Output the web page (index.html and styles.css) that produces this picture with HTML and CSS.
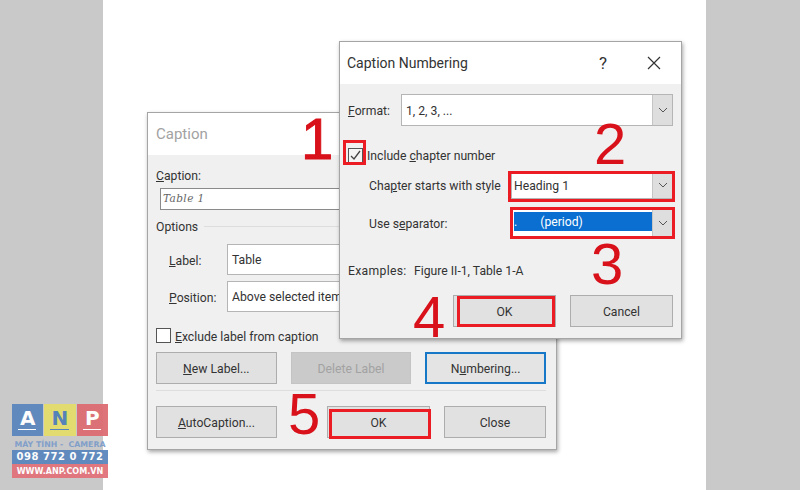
FILE: index.html
```html
<!DOCTYPE html>
<html lang="en">
<head>
<meta charset="utf-8">
<title>Caption Numbering</title>
<link rel="stylesheet" href="styles.css">
</head>
<body>
<main class="page">
  <section class="dialog caption-dialog">
    <header class="titlebar caption-title"><h2 class="title muted">Caption</h2></header>
    <div class="body caption-body">
      <label class="lbl"><u>C</u>aption:</label>
      <div class="caption-input">Table 1</div>
      <div class="group"><span class="nudge">Options</span><i class="rule"></i></div>
      <div class="opt-row first"><label class="opt-label"><u>L</u>abel:</label><div class="field">Table</div></div>
      <div class="opt-row"><label class="opt-label"><u>P</u>osition:</label><div class="field">Above selected item</div></div>
      <div class="check-row"><span class="check"></span><span class="nudge"><u>E</u>xclude label from caption</span></div>
      <div class="btn-row">
        <button class="btn w121"><u>N</u>ew Label...</button>
        <button class="btn w121 disabled">Delete Label</button>
        <button class="btn w121 focused">N<u>u</u>mbering...</button>
      </div>
      <hr class="sep">
      <div class="btn-row last">
        <button class="btn w121"><u>A</u>utoCaption...</button>
        <button class="btn ok2">OK</button>
        <button class="btn close">Close</button>
      </div>
    </div>
  </section>

  <section class="dialog num-dialog">
    <header class="titlebar num-title">
      <h2 class="title">Caption Numbering</h2>
      <span class="help">?</span>
      <svg class="x" width="14" height="14" viewBox="0 0 14 14"><path d="M1 1l12 12M13 1L1 13" stroke="#333" stroke-width="1.2" fill="none"/></svg>
    </header>
    <div class="body num-body">
      <div class="format-row">
        <label class="fmt-label"><u>F</u>ormat:</label>
        <div class="select fmt-select"><span class="val fmt-val">1, 2, 3, ...</span><span class="arrow"><svg width="10" height="6" viewBox="0 0 10 6"><path d="M1 1l4 4 4-4" stroke="#555" fill="none"/></svg></span></div>
      </div>
      <div class="include-row"><span class="check checked"><svg width="13" height="13" viewBox="0 0 13 13"><path d="M2 7l3 3 6-8" stroke="#444" stroke-width="1.3" fill="none"/></svg></span><span class="nudge">Include <u>c</u>hapter number</span></div>
      <div class="sub-row"><label>Cha<u>p</u>ter starts with style</label>
        <div class="select sub-select"><span class="val">Heading 1</span><span class="arrow"><svg width="10" height="6" viewBox="0 0 10 6"><path d="M1 1l4 4 4-4" stroke="#555" fill="none"/></svg></span></div></div>
      <div class="sub-row second"><label>Use s<u>e</u>parator:</label>
        <div class="select sub-select sep-select"><span class="val hl">.<span class="period">(period)</span></span><span class="arrow"><svg width="10" height="6" viewBox="0 0 10 6"><path d="M1 1l4 4 4-4" stroke="#555" fill="none"/></svg></span></div></div>
      <div class="examples"><span class="ex-label">Examples:</span><span>Figure II-1, Table 1-A</span></div>
      <div class="num-buttons"><button class="btn numbtn">OK</button><button class="btn numbtn">Cancel</button></div>
    </div>
  </section>

  <span class="mark m1">1</span>
  <span class="mark m2">2</span>
  <span class="mark m3">3</span>
  <span class="mark m4">4</span>
  <span class="mark m5">5</span>
  <i class="box b-check"></i>
  <i class="box b-head"></i>
  <i class="box b-sep"></i>
  <i class="box b-ok"></i>
  <i class="box b-ok2"></i>

  <aside class="logo">
    <div class="tiles">
      <span class="tile blue">A</span><span class="tile yellow">N</span><span class="tile red">P</span>
    </div>
    <div class="logo-sub">MÁY TÍNH -&nbsp; CAMERA</div>
    <div class="band blue">098 772 0 772</div>
    <div class="band red small">WWW.ANP.COM.VN</div>
  </aside>
</main>
</body>
</html>
```
FILE: styles.css
```css
* { box-sizing: border-box; }
html, body { margin: 0; padding: 0; }
body { width: 800px; height: 490px; overflow: hidden; background: #c9c9c9; font-family: Roboto, "Noto Sans", sans-serif; font-size: 12.2px; color: #333; }
.page { position: relative; width: 603px; height: 490px; margin-left: 103px; background: #fff; }
.dialog { position: absolute; background: #f0f0f0; border: 1px solid #a5a5a5; box-shadow: 1px 2px 4px rgba(0,0,0,.35); display: flex; flex-direction: column; }
.caption-dialog { left: 44px; top: 112px; width: 410px; height: 338px; }
.num-dialog { left: 236px; top: 41px; width: 343px; height: 298px; }
.titlebar { background: #fff; display: flex; align-items: center; flex: none; height: 42px; padding: 0 0 1px 7px; }
.caption-title { padding-bottom: 0; padding-left: 8px; }
.title { margin: 0; font-size: 14px; font-weight: 400; color: #333; flex: 1; }
.title.muted { color: #a2a2a2; font-size: 15px; }
.help { font-size: 17px; margin-right: 40px; }
.x { margin-right: 20px; }
.body { flex: 1; display: flex; flex-direction: column; }
.caption-body { padding: 12px 10px 0 8px; }
.lbl { line-height: 19px; margin-bottom: -2px; }
.nudge { padding-top: 2px; }
.caption-input { margin: 4px 0 0 4px; height: 22px; border: 1px solid #8a8a8a; background: #fff; font-family: "DejaVu Serif", serif; font-style: italic; font-size: 10.5px; color: #666; padding-left: 2px; line-height: 19px; letter-spacing: .4px; }
.group { display: flex; align-items: center; gap: 6px; margin-top: 7px; height: 18px; }
.rule { flex: 1; border-top: 1px solid #ddd; }
.opt-row { display: flex; align-items: center; margin-top: 6px; height: 31px; }
.opt-row.first { margin-top: 9px; }
.opt-label { width: 71px; padding-left: 13px; padding-top: 2px; }
.field { flex: 1; height: 100%; background: #fff; border: 1px solid #b5b5b5; padding-left: 4px; line-height: 31px; }
.check-row { display: flex; align-items: center; gap: 4px; margin-top: 14px; height: 19px; }
.check { display: inline-flex; align-items: center; justify-content: center; width: 15px; height: 15px; background: #fff; border: 1px solid #555; flex: none; }
.btn-row { display: flex; gap: 14px; margin-top: 7px; }
.btn { font: inherit; color: #333; background: #e1e1e1; border: 1px solid #adadad; height: 32px; padding: 2px 0 0; }
.w121 { width: 121px; }
.disabled { background: #cacaca; color: #a2a2a2; border-color: #c4c4c4; }
.focused { border: 2px solid #1878c8; background: #e4e4e4; }
.sep { width: 100%; border: 0; border-top: 1px solid #ddd; margin: 6px 0 0; }
.btn-row.last { margin-top: 15px; }
.ok2 { width: 103px; margin-left: 36px; }
.close { width: 102px; }
.num-body { padding: 10px 8px 0 8px; }
.format-row { display: flex; align-items: center; height: 32px; }
.fmt-label { width: 54px; padding-top: 2px; flex: none; margin-right: -1px; }
.select { display: flex; background: #fff; border: 1px solid #b5b5b5; }
.fmt-select { flex: 1; height: 100%; }
.val { flex: 1; padding: 2px 0 0 2px; display: flex; align-items: center; white-space: pre; }
.fmt-val { padding-left: 4px; }
.arrow { width: 20px; background: #dedede; border-left: 1px solid #c5c5c5; display: flex; align-items: center; justify-content: center; flex: none; }
.include-row { display: flex; align-items: center; gap: 4px; margin-top: 20px; height: 18px; }
.check.checked { background: #f4f4f4; }
.sub-row { display: flex; align-items: center; margin-top: 7px; height: 28px; padding-left: 21px; }
.sub-row label { width: 142px; flex: none; white-space: nowrap; padding-top: 2px; }
.sub-select { flex: 1; height: 100%; }
.sub-row.second { margin-top: 8px; height: 31px; }
.sep-select { padding: 4px 0 0 2px; }
.sep-select .arrow { margin-top: -4px; }
.hl { background: #0a6fd0; color: #fff; height: 19px; padding: 1px 0 0; }
.period { margin-left: 23px; }
.examples { display: flex; margin-top: 24px; line-height: 19px; margin-bottom: -2px; }
.ex-label { width: 66px; letter-spacing: .3px; }
.num-buttons { display: flex; justify-content: flex-end; gap: 14px; margin-top: 16px; }
.numbtn { width: 103px; }
.mark { position: absolute; font-family: "Liberation Sans", sans-serif; font-size: 58px; line-height: 58px; color: #d8111a; }
.m1 { left: 198px; top: 110px; -webkit-text-stroke: 1px #d8111a; }
.m2 { left: 491px; top: 115px; }
.m3 { left: 488px; top: 235px; }
.m4 { left: 310px; top: 288px; }
.m5 { left: 185px; top: 385px; }
.box { position: absolute; border: 3px solid #ec1c24; }
.b-check { left: 240px; top: 140px; width: 23px; height: 25px; }
.b-head { left: 405px; top: 171px; width: 167px; height: 31px; }
.b-sep { left: 407px; top: 207px; width: 165px; height: 32px; }
.b-ok { left: 354px; top: 296px; width: 98px; height: 31px; }
.b-ok2 { left: 226px; top: 409px; width: 102px; height: 30px; }
.logo { position: absolute; left: -91px; top: 404px; width: 96px; display: flex; flex-direction: column; opacity: .95; font-family: "DejaVu Sans", sans-serif; font-weight: 700; }
.tiles { display: flex; gap: 1px; }
.tile { position: relative; width: 31.5px; height: 32px; color: #fff; font-size: 20px; display: flex; align-items: center; justify-content: center; padding-bottom: 4px; }
.tile::after { content: ""; position: absolute; left: 6px; right: 7px; bottom: 6px; border-top: 1px solid currentColor; }
.blue { background: #5b87bd; }
.yellow { background: #e4de6c; color: #4f7fb8; }
.tile.red { background: #dd6c72; }
.logo-sub { font-size: 7.8px; color: #7d9dca; text-align: center; margin-top: 3px; height: 11px; line-height: 11px; white-space: nowrap; }
.band { height: 14px; color: #fff; text-align: center; line-height: 14px; font-size: 10px; letter-spacing: .55px; white-space: nowrap; }
.band.red { background: #e2727a; }
.band.small { font-size: 8.1px; letter-spacing: 0; }
```
